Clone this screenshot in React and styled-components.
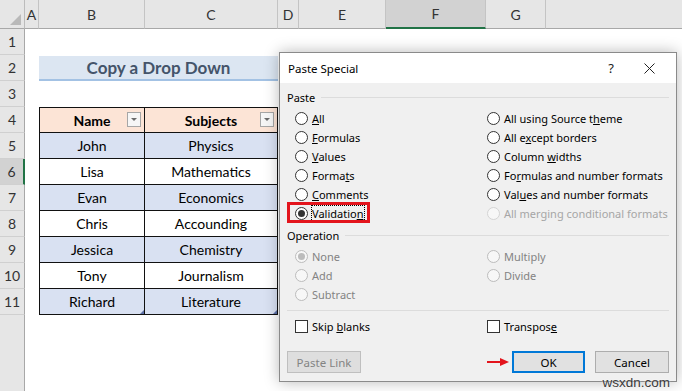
import React from "react";
import styled, { createGlobalStyle } from "styled-components";

const GlobalStyle = createGlobalStyle`
  html, body { margin: 0; padding: 0; }
  body { width: 682px; height: 391px; overflow: hidden; background: #fff; }
`;

const Screen = styled.div`
  position: relative;
  width: 682px;
  height: 391px;
  overflow: hidden;
  background: #fff;
  font-family: Lato, "Liberation Sans", sans-serif;
`;

// ---------- spreadsheet ----------
const Sheet = styled.div`
  display: grid;
  grid-template-columns: 25px 14px 106px 133px 21px 87px 100px 60px 1fr;
  grid-template-rows: 29px repeat(14, 26px);
`;

const Corner = styled.div`
  position: relative;
  background: #e6e6e6;
  border-right: 1px solid #bcbcbc;
  border-bottom: 1px solid #a8a8a8;
  &::after {
    content: "";
    position: absolute;
    right: 3px;
    bottom: 3px;
    border-left: 11px solid transparent;
    border-bottom: 11px solid #b9b9b9;
  }
`;

const ColHead = styled.div`
  display: flex;
  align-items: center;
  justify-content: center;
  font-size: 14px;
  color: #333;
  background: ${(p) => (p.$selected ? "#d2d2d2" : "#e6e6e6")};
  border-right: ${(p) => (p.$last ? "none" : "1px solid #c4c4c4")};
  border-bottom: ${(p) => (p.$selected ? "2px solid #217346" : "1px solid #a8a8a8")};
`;

const RowHead = styled.div`
  grid-column: 1;
  grid-row: ${(p) => p.$row};
  display: flex;
  align-items: center;
  justify-content: center;
  font-size: 14px;
  color: #333;
  background: ${(p) => (p.$selected ? "#d2d2d2" : "#e6e6e6")};
  border-right: ${(p) => (p.$selected ? "2px solid #217346" : "1px solid #a8a8a8")};
  border-bottom: ${(p) => (p.$blank ? "none" : "1px solid #d0d0d0")};
`;

const Title = styled.div`
  grid-column: 3 / span 2;
  grid-row: 3;
  display: flex;
  align-items: center;
  justify-content: center;
  margin-top: 1px;
  background: #dce6f2;
  border-bottom: 2px solid #a3c2e4;
  color: #44546a;
  font-weight: 700;
  font-size: 17px;
`;

const Cell = styled.div`
  grid-column: ${(p) => p.$col};
  grid-row: ${(p) => p.$row};
  position: relative;
  display: flex;
  align-items: center;
  justify-content: center;
  background: ${(p) => (p.$head ? "#fce4d6" : p.$band ? "#d9e1f2" : "#fff")};
  border-right: 1px solid #111;
  border-bottom: 1px solid #111;
  border-left: ${(p) => (p.$col === 3 ? "1px solid #111" : "none")};
  border-top: ${(p) => (p.$head ? "1px solid #111" : "none")};
  font-size: 14px;
  font-weight: ${(p) => (p.$head ? 700 : 400)};
  color: #000;
  &::after {
    content: "";
    display: ${(p) => (p.$end ? "block" : "none")};
    position: absolute;
    right: 0;
    bottom: 0;
    border-left: 4px solid transparent;
    border-bottom: 4px solid #5b6fa6;
  }
`;

const FilterButton = styled.span`
  position: absolute;
  right: 3px;
  top: 4px;
  width: 14px;
  height: 15px;
  box-sizing: border-box;
  border: 1px solid #a6a6a6;
  background: #f6f6f6;
  display: flex;
  align-items: center;
  justify-content: center;
  &::before {
    content: "";
    border-left: 3px solid transparent;
    border-right: 3px solid transparent;
    border-top: 3px solid #6b6b6b;
  }
`;

// ---------- dialog ----------
const Dialog = styled.div`
  position: absolute;
  left: 279px;
  top: 52px;
  width: 398px;
  height: 330px;
  box-sizing: border-box;
  border: 1px solid #8a8a8a;
  background: #f0f0f0;
  box-shadow: 0 0 14px rgba(0, 0, 0, 0.28);
  display: flex;
  flex-direction: column;
  font-family: "Noto Sans", "Open Sans", sans-serif;
  font-size: 11px;
  color: #000;
`;

const TitleBar = styled.div`
  height: 30px;
  flex-shrink: 0;
  background: #fff;
  display: flex;
  align-items: center;
  padding-left: 8px;
  font-size: 11.5px;
`;

const TitleText = styled.span`
  flex: 1;
`;

const TitleButton = styled.span`
  width: ${(p) => p.$w}px;
  height: 30px;
  display: flex;
  align-items: center;
  justify-content: center;
  font-size: 13px;
  color: #222;
`;

const Body = styled.div`
  flex: 1;
  display: flex;
  flex-direction: column;
  padding: 0 7px;
`;

const GroupHeader = styled.div`
  display: flex;
  align-items: center;
  gap: 6px;
  height: 16px;
  margin-top: ${(p) => p.$mt}px;
  &::after {
    content: "";
    flex: 1;
    height: 1px;
    background: #dcdcdc;
  }
`;

const OptionGrid = styled.div`
  display: grid;
  grid-template-columns: 192px 1fr;
  grid-template-rows: repeat(${(p) => p.$rows}, 19px);
  grid-auto-flow: column;
  margin: 4px 0 0 8px;
`;

const Option = styled.label`
  position: relative;
  display: flex;
  align-items: center;
  gap: 4px;
  color: ${(p) => (p.$faint ? "#a6a6a6" : p.$disabled ? "#838383" : "#000")};
  white-space: nowrap;
  &::after {
    content: "";
    display: ${(p) => (p.$highlight ? "block" : "none")};
    position: absolute;
    left: -8px;
    top: -2px;
    width: 83px;
    height: 21px;
    box-sizing: border-box;
    border: 3px solid #e3141c;
  }
`;

const Radio = styled.span`
  width: 13px;
  height: 13px;
  box-sizing: border-box;
  border-radius: 50%;
  border: 1px solid ${(p) => (p.$faint ? "#d4d4d4" : p.$disabled ? "#bcbcbc" : "#333")};
  background: ${(p) => (p.$disabled ? "#f7f7f7" : "#fff")};
  display: flex;
  align-items: center;
  justify-content: center;
  flex-shrink: 0;
  &::before {
    content: "";
    display: ${(p) => (p.$checked ? "block" : "none")};
    width: 7px;
    height: 7px;
    border-radius: 50%;
    background: ${(p) => (p.$disabled ? "#bcbcbc" : "#333")};
  }
`;

const OptionText = styled.span`
  line-height: 15px;
  outline: ${(p) => (p.$focused ? "1px dotted #000" : "none")};
  padding-right: ${(p) => (p.$focused ? 1 : 0)}px;
`;

const Separator = styled.div`
  height: 1px;
  background: #dcdcdc;
  margin-top: 6px;
`;

const CheckGrid = styled.div`
  display: grid;
  grid-template-columns: 192px 1fr;
  height: 19px;
  margin: 6px 0 0 8px;
`;

const CheckBox = styled.span`
  width: 13px;
  height: 13px;
  box-sizing: border-box;
  border: 1px solid #333;
  background: #fff;
  flex-shrink: 0;
`;

const ButtonRow = styled.div`
  display: flex;
  align-items: center;
  margin-top: 15px;
`;

const Button = styled.button`
  width: ${(p) => p.$w}px;
  height: 22px;
  margin-left: ${(p) => p.$ml || 0}px;
  box-sizing: border-box;
  padding: 0;
  font-family: inherit;
  font-size: 11.5px;
  background: ${(p) => (p.$disabled ? "#dedede" : "#e1e1e1")};
  color: ${(p) => (p.$disabled ? "#838383" : "#000")};
  border: ${(p) =>
    p.$primary ? "2px solid #0078d7" : p.$disabled ? "1px solid #bfbfbf" : "1px solid #adadad"};
`;

const Spacer = styled.span`
  flex: 1;
`;

const Arrow = styled.svg`
  width: 22px;
  height: 10px;
  margin-right: 3px;
`;

const Watermark = styled.div`
  position: absolute;
  right: 12px;
  bottom: 1px;
  font-family: "Liberation Sans", sans-serif;
  font-size: 13.5px;
  color: #3a3a3a;
  text-shadow: 0 0 2px #fff;
`;

const columns = [
  { key: "A" },
  { key: "B" },
  { key: "C" },
  { key: "D" },
  { key: "E" },
  { key: "F", selected: true },
  { key: "G" },
];

const people = [
  ["John", "Physics"],
  ["Lisa", "Mathematics"],
  ["Evan", "Economics"],
  ["Chris", "Accounding"],
  ["Jessica", "Chemistry"],
  ["Tony", "Journalism"],
  ["Richard", "Literature"],
];

const pasteOptions = [
  { label: <><u>A</u>ll</> },
  { label: <><u>F</u>ormulas</> },
  { label: <><u>V</u>alues</> },
  { label: <>Forma<u>t</u>s</> },
  { label: <><u>C</u>omments</> },
  { label: <>Validatio<u>n</u></>, checked: true, highlight: true },
  { label: <>All using Source t<u>h</u>eme</> },
  { label: <>All e<u>x</u>cept borders</> },
  { label: <>Column <u>w</u>idths</> },
  { label: <>Fo<u>r</u>mulas and number formats</> },
  { label: <>Val<u>u</u>es and number formats</> },
  { label: <>All merging conditional formats</>, faint: true },
];

const operations = [
  { label: "None", checked: true },
  { label: "Add" },
  { label: "Subtract" },
  { label: "Multiply" },
  { label: "Divide" },
];

const RadioOption = ({ label, checked, highlight, faint, disabled }) => (
  <Option $highlight={highlight} $faint={faint} $disabled={disabled}>
    <Radio $checked={checked} $faint={faint} $disabled={disabled || faint} />
    <OptionText $focused={highlight}>{label}</OptionText>
  </Option>
);

export default function App() {
  return (
    <Screen>
      <GlobalStyle />
      <Sheet>
        <Corner />
        {columns.map((c) => (
          <ColHead key={c.key} $selected={c.selected}>
            {c.key}
          </ColHead>
        ))}
        <ColHead $last />

        {Array.from({ length: 14 }, (_, i) => (
          <RowHead key={i} $row={i + 2} $selected={i === 5} $blank={i > 10}>
            {i < 11 ? i + 1 : ""}
          </RowHead>
        ))}

        <Title>Copy a Drop Down</Title>

        <Cell $col={3} $row={5} $head>
          Name
          <FilterButton />
        </Cell>
        <Cell $col={4} $row={5} $head>
          Subjects
          <FilterButton />
        </Cell>

        {people.map(([name, subject], i) => (
          <React.Fragment key={name}>
            <Cell $col={3} $row={i + 6} $band={i % 2 === 0} $end={i === people.length - 1}>
              {name}
            </Cell>
            <Cell $col={4} $row={i + 6} $band={i % 2 === 0} $end={i === people.length - 1}>
              {subject}
            </Cell>
          </React.Fragment>
        ))}
      </Sheet>

      <Dialog>
        <TitleBar>
          <TitleText>Paste Special</TitleText>
          <TitleButton $w={30}>?</TitleButton>
          <TitleButton $w={46}>
            <svg width="11" height="11" viewBox="0 0 11 11">
              <path d="M0.5 0.5 L10.5 10.5 M10.5 0.5 L0.5 10.5" stroke="#222" strokeWidth="1" />
            </svg>
          </TitleButton>
          <TitleButton $w={4} />
        </TitleBar>
        <Body>
          <GroupHeader $mt={6}>Paste</GroupHeader>
          <OptionGrid $rows={6}>
            {pasteOptions.map((o, i) => (
              <RadioOption key={i} {...o} />
            ))}
          </OptionGrid>

          <GroupHeader $mt={4}>Operation</GroupHeader>
          <OptionGrid $rows={3}>
            {operations.map((o) => (
              <RadioOption key={o.label} {...o} disabled />
            ))}
          </OptionGrid>

          <Separator />

          <CheckGrid>
            <Option>
              <CheckBox />
              <OptionText>
                Skip <u>b</u>lanks
              </OptionText>
            </Option>
            <Option>
              <CheckBox />
              <OptionText>
                Transpos<u>e</u>
              </OptionText>
            </Option>
          </CheckGrid>

          <ButtonRow>
            <Button $w={74} $disabled>
              Paste Link
            </Button>
            <Spacer />
            <Arrow viewBox="0 0 22 10">
              <path d="M0 4 H13 V1 L22 5 L13 9 V6 H0 Z" fill="#e3141c" />
            </Arrow>
            <Button $w={73} $primary>
              OK
            </Button>
            <Button $w={74} $ml={10}>
              Cancel
            </Button>
          </ButtonRow>
        </Body>
      </Dialog>

      <Watermark>wsxdn.com</Watermark>
    </Screen>
  );
}
